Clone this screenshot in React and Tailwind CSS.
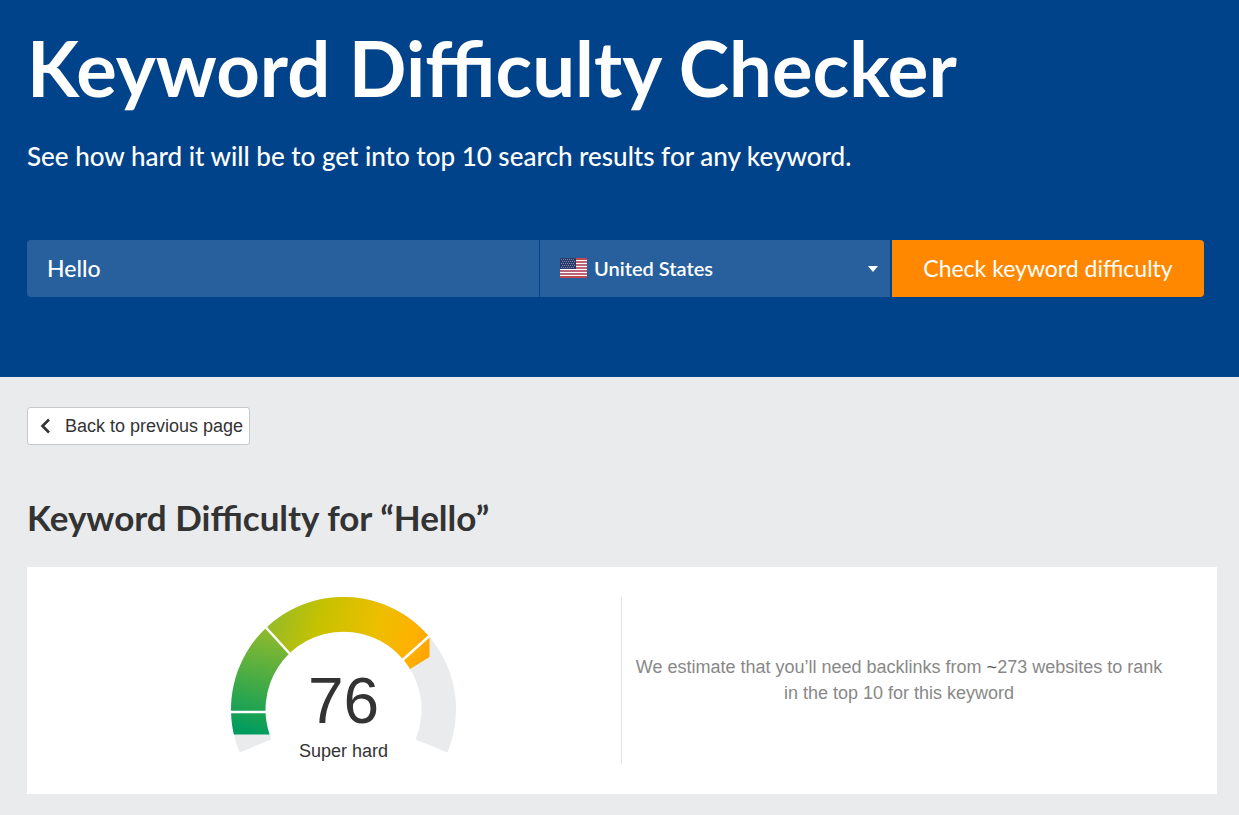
import { useState } from "react";

const COUNTRIES = ["United States", "United Kingdom", "Canada", "Germany", "Australia"];

function UsFlag() {
  return (
    <svg viewBox="0 0 27 20" className="w-[27px] h-5" aria-hidden="true">
      <rect width="27" height="20" fill="#fff" />
      {[0, 3, 6, 9, 12, 15, 18].map((y) => (
        <rect key={y} y={y} width="27" height="2" fill={y === 0 || y === 18 ? "#c2474f" : "#bd6377"} />
      ))}
      <rect width="16" height="11" fill="#2b3a6b" />
      {[1, 3, 5, 7, 9].map((y, row) =>
        [1, 3, 5, 7, 9, 11, 13].map((x) => (
          <rect key={`${x}-${y}`} x={x + (row % 2)} y={y} width="1" height="1" fill="#7c87ad" />
        ))
      )}
    </svg>
  );
}

function SearchForm({ keyword, setKeyword }) {
  const [country, setCountry] = useState(COUNTRIES[0]);

  return (
    <form className="flex mt-16 h-[57px] pr-2" onSubmit={(e) => e.preventDefault()}>
      <input
        type="text"
        aria-label="Keyword"
        value={keyword}
        onChange={(e) => setKeyword(e.target.value)}
        className="flex-1 min-w-0 mr-px px-5 rounded-l bg-[#285f9d] text-[23px] font-medium text-white outline-none"
      />
      <div className="relative w-[350px] mr-0.5">
        <select
          aria-label="Country"
          value={country}
          onChange={(e) => setCountry(e.target.value)}
          className="w-full h-full pl-[54px] pr-10 pb-0.5 appearance-none bg-[#285f9d] text-xl font-semibold text-white outline-none"
        >
          {COUNTRIES.map((c) => (
            <option key={c}>{c}</option>
          ))}
        </select>
        <span className="absolute left-5 top-[18px] pointer-events-none">
          <UsFlag />
        </span>
        <svg viewBox="0 0 10 6" className="absolute right-3 top-[26px] w-2.5 h-1.5 pointer-events-none" aria-hidden="true">
          <path d="M0 0h10L5 6z" fill="#fff" />
        </svg>
      </div>
      <button type="submit" className="w-[312px] rounded-r bg-[#ff8800] text-[23px] text-white">
        Check keyword difficulty
      </button>
    </form>
  );
}

function Gauge({ score, label }) {
  const band =
    "M8.6 155.6A112.5 112.5 0 1 1 216.4 155.6L184.6 142.4A78 78 0 1 0 40.4 142.4Z";

  return (
    <div className="relative w-[225px]">
      <svg viewBox="0 0 225 156" className="block w-[225px] h-[156px]" aria-hidden="true">
        <defs>
          <linearGradient id="low" gradientUnits="userSpaceOnUse" x1="24" y1="137" x2="48" y2="33">
            <stop offset="0" stopColor="#009c5f" />
            <stop offset="0.22" stopColor="#1fa353" />
            <stop offset="1" stopColor="#92bb2b" />
          </linearGradient>
          <linearGradient id="high" gradientUnits="userSpaceOnUse" x1="40" y1="30" x2="200" y2="76">
            <stop offset="0" stopColor="#98bb26" />
            <stop offset="0.27" stopColor="#c6c200" />
            <stop offset="0.62" stopColor="#eebe00" />
            <stop offset="0.85" stopColor="#ffb000" />
            <stop offset="1" stopColor="#ff9f00" />
          </linearGradient>
          <clipPath id="lowClip">
            <path d="M0 0H8L112.5 118V137.5H0Z" />
          </clipPath>
          <clipPath id="highClip">
            <path d="M8 0H198.5V60L179 72L112.5 113V118Z" />
          </clipPath>
        </defs>
        <path d={band} fill="#e9ebec" />
        <path d={band} fill="url(#low)" clipPath="url(#lowClip)" />
        <path d={band} fill="url(#high)" clipPath="url(#highClip)" />
        <path d="M0 115H35M34.5 30L59 57M200 37.5L171 63.5" stroke="#fff" strokeWidth="2.5" />
      </svg>
      <div className="absolute inset-x-0 top-[72px] text-center text-[#333]">
        <div className="text-[64px] leading-16">{score}</div>
        <div className="mt-1.5 text-lg leading-6">{label}</div>
      </div>
    </div>
  );
}

export default function App() {
  const [keyword, setKeyword] = useState("Hello");

  return (
    <div className="min-h-screen bg-[#e9ebec] font-['Liberation_Sans',sans-serif]">
      {/* Hero */}
      <header className="bg-[#00438a] px-[27px] pt-[22px] pb-20 text-white font-['Lato',sans-serif]">
        <h1 className="text-[76px] leading-[92px] font-bold">Keyword Difficulty Checker</h1>
        <p className="mt-6 mb-[66px] text-[26px] leading-9 font-medium">
          See how hard it will be to get into top 10 search results for any keyword.
        </p>
        <SearchForm keyword={keyword} setKeyword={setKeyword} />
      </header>

      {/* Result */}
      <main className="pl-[27px] pr-[22px] pt-[30px] pb-5">
        <button
          type="button"
          className="flex items-center h-[38px] pl-[11px] pr-1.5 rounded-[3px] border border-[#c8c8c8] bg-white text-lg text-[#333]"
        >
          <svg viewBox="0 0 12 16" className="w-3 h-4 mr-3.5" aria-hidden="true">
            <path d="M10 1.5L3.5 8L10 14.5" fill="none" stroke="#333" strokeWidth="2.6" />
          </svg>
          Back to previous page
        </button>

        <h2 className="mt-[50px] text-[35px] leading-11 font-bold text-[#333] font-['Lato',sans-serif]">
          Keyword Difficulty for “{keyword}”
        </h2>

        <section className="grid grid-cols-2 mt-7 pl-[39px] pr-[41px] py-[30px] bg-white">
          <div className="flex justify-center h-[167px]">
            <Gauge score={76} label="Super hard" />
          </div>
          <div className="flex items-center justify-center pb-0.5 border-l border-[#e5e5e5]">
            <p className="text-center text-lg leading-[26px] text-[#888]">
              We estimate that you’ll need backlinks from <span className="text-[#555]">~</span>273 websites to rank
              <br />
              in the top 10 for this keyword
            </p>
          </div>
        </section>
      </main>
    </div>
  );
}
